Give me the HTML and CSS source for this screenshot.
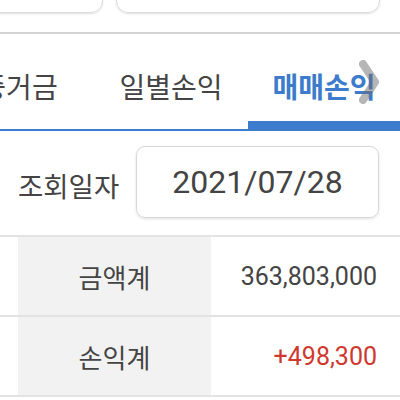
FILE: index.html
```html
<!DOCTYPE html>
<html lang="ko">
<head>
<meta charset="utf-8">
<link rel="stylesheet" href="styles.css">
</head>
<body>
<div class="top">
  <div class="box box-left"></div>
  <div class="box box-right"></div>
</div>
<div class="tabs">
  <div class="tab tab-first">증거금</div>
  <div class="tab tab-second">일별손익</div>
  <div class="tab active">매매손익</div>
  <svg class="chev" width="30" height="50" viewBox="0 0 30 50">
    <polyline points="8,6 20,24 8,42" fill="none" stroke="rgba(110,110,110,0.5)" stroke-width="8" stroke-linecap="round" stroke-linejoin="round"/>
  </svg>
</div>
<div class="query">
  <span class="label">조회일자</span>
  <div class="date">2021/07/28</div>
</div>
<div class="table">
  <div class="row">
    <div class="key">금액계</div>
    <div class="val">363,803,000</div>
  </div>
  <div class="row">
    <div class="key">손익계</div>
    <div class="val red">+498,300</div>
  </div>
</div>
</body>
</html>
```
FILE: styles.css
```css
html, body {
  margin: 0;
  padding: 0;
  background: #fff;
  width: 400px;
  height: 400px;
  overflow: hidden;
  font-family: "Noto Sans CJK KR", "Noto Sans", sans-serif;
  color: #444;
}
.top {
  height: 34px;
  display: flex;
  align-items: flex-end;
  border-bottom: 2px solid #d4d4d4;
  overflow: hidden;
  box-sizing: border-box;
}
.box {
  height: 50px;
  margin-bottom: 19px;
  border: 1.5px solid #dcdcdc;
  border-radius: 12px;
  box-shadow: 0 1px 2px rgba(0,0,0,0.12);
  box-sizing: border-box;
  flex: none;
}
.box-left {
  width: 123px;
  margin-left: -20px;
}
.box-right {
  width: 264px;
  margin-left: 13px;
}
.tabs {
  position: relative;
  height: 97px;
  display: flex;
  border-bottom: 2px solid #3d7bcc;
  box-sizing: border-box;
  overflow: hidden;
}
.tab {
  flex: none;
  width: 150px;
  display: flex;
  align-items: center;
  justify-content: center;
  font-size: 28px;
  color: #444;
  padding-top: 8px;
  box-sizing: border-box;
}
.tab-first {
  margin-left: -56px;
}
.tab-second {
  width: 154px;
}
.tab.active {
  color: #3d7bcc;
  font-weight: 700;
  border-bottom: 8px solid #3d7bcc;
  padding-top: 16px;
  width: 152px;
}
.chev {
  position: absolute;
  left: 355px;
  top: 24px;
  filter: blur(0.6px);
}
.query {
  height: 106px;
  display: flex;
  align-items: center;
  padding-left: 18px;
  border-bottom: 2px solid #e3e3e3;
  box-sizing: border-box;
}
.label {
  font-size: 27.5px;
  color: #444;
  width: 118px;
  padding-top: 3px;
}
.date {
  width: 243px;
  height: 72px;
  border: 1.5px solid #d8d8d8;
  border-radius: 9px;
  box-shadow: 0 1px 3px rgba(0,0,0,0.12);
  box-sizing: border-box;
  display: flex;
  align-items: center;
  justify-content: center;
  font-family: "Roboto", "Noto Sans", sans-serif;
  font-size: 32px;
  color: #444;
  margin-top: -2px;
}
.row {
  display: flex;
  height: 80px;
  border-bottom: 2px solid #e3e3e3;
  box-sizing: border-box;
  padding-left: 18px;
}
.key {
  width: 193px;
  background: #f2f2f2;
  display: flex;
  align-items: center;
  justify-content: center;
  font-size: 26px;
  color: #444;
}
.val {
  flex: 1;
  display: flex;
  align-items: center;
  justify-content: flex-end;
  padding-right: 23px;
  font-family: "Roboto", "Noto Sans", sans-serif;
  font-size: 25px;
  color: #444;
}
.val.red {
  color: #d0382f;
}
```
